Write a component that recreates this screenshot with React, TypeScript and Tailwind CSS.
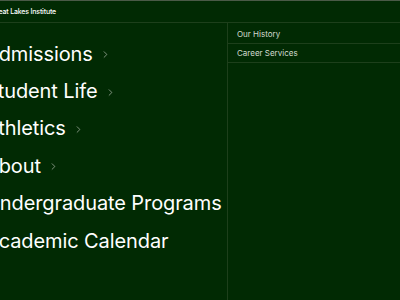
import React from "react";
import { ChevronRight } from "lucide-react";

const mainLinks = [
  { label: "Admissions", sub: true },
  { label: "Student Life", sub: true },
  { label: "Athletics", sub: true },
  { label: "About", sub: true },
  { label: "Undergraduate Programs", sub: false },
  { label: "Academic Calendar", sub: false },
];

const sideLinks = ["Our History", "Career Services"];

export default function App() {
  return (
    <div
      className="w-[400px] h-[300px] overflow-hidden bg-[#012a03] text-white border-t border-[#4a5a47] flex flex-col"
      style={{ fontFamily: "Inter, 'Noto Sans', sans-serif" }}
    >
      {/* header */}
      <div className="h-[22px] shrink-0 flex items-center border-b border-[#1d3f1b]">
        <span className="ml-[-9px] mt-[2px] text-[7px] font-medium tracking-tight whitespace-nowrap">
          Great Lakes Institute
        </span>
      </div>

      <div className="flex flex-1">
        {/* main menu */}
        <nav className="w-[228px] shrink-0 border-r border-[#1d3f1b] pt-[12px]">
          <ul className="ml-[-15px]">
            {mainLinks.map((link) => (
              <li key={link.label} className="h-[37.4px] flex items-center gap-[7px] whitespace-nowrap">
                <span className="text-[20px] leading-none tracking-[-0.1px]">{link.label}</span>
                {link.sub && (
                  <ChevronRight size={11} strokeWidth={1.5} className="text-[#b4bdb1] mt-[2px]" />
                )}
              </li>
            ))}
          </ul>
        </nav>

        {/* secondary links */}
        <div className="flex-1 pt-[2px]">
          {sideLinks.map((s) => (
            <div
              key={s}
              className="h-[19px] flex items-center pl-[9px] border-b border-[#1d3f1b] text-[8px] text-[#d3dbcf]"
            >
              {s}
            </div>
          ))}
        </div>
      </div>
    </div>
  );
}
